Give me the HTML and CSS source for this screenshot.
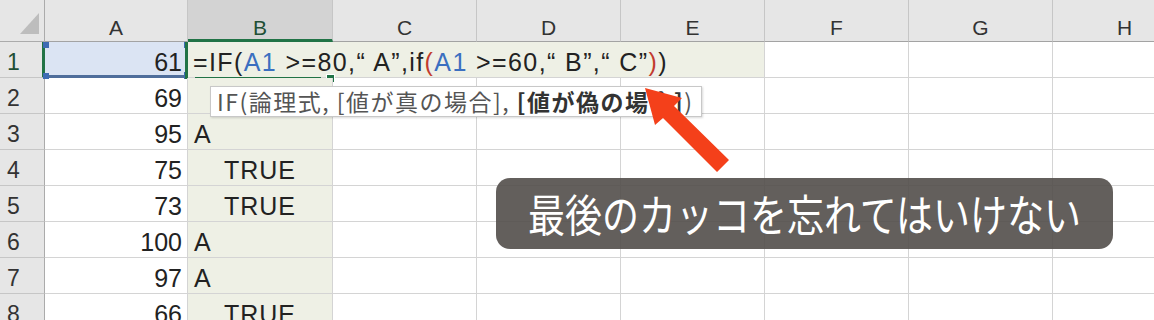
FILE: index.html
```html
<!DOCTYPE html>
<html lang="ja">
<head>
    <meta charset="UTF-8">
    <meta name="viewport" content="width=device-width, initial-scale=1.0">
    <title>IF関数</title>
    <link rel="stylesheet" href="styles.css">
</head>
<body>
    <div class="sheet">
        <div class="corner"><span class="corner-tri"></span></div>
        <div class="col-head">A</div>
        <div class="col-head sel">B</div>
        <div class="col-head">C</div>
        <div class="col-head">D</div>
        <div class="col-head">E</div>
        <div class="col-head">F</div>
        <div class="col-head">G</div>
        <div class="col-head">H</div>

        <!-- row 1 : A1 referenced, B1 in edit mode -->
        <div class="row-head sel">1</div>
        <div class="cell num ref">61
            <i class="knob tl"></i><i class="knob tr"></i><i class="knob bl"></i><i class="knob br"></i>
        </div>
        <div class="cell edit">
            <span class="formula">=IF(<span class="c-blue">A1</span> &gt;=80,“ A”,if<span class="c-red">(</span><span class="c-blue">A1</span> &gt;=60,“ B”,“ C”<span class="c-red">)</span>)</span>
            <div class="active-frame"><i class="fill-handle"></i></div>
        </div>
        <div class="cell"></div>
        <div class="cell"></div>
        <div class="cell"></div>

        <div class="row-head">2</div>
        <div class="cell num">69</div>
        <div class="cell col-b"></div>
        <div class="cell"></div><div class="cell"></div><div class="cell"></div><div class="cell"></div><div class="cell"></div><div class="cell"></div>

        <div class="row-head">3</div>
        <div class="cell num">95</div>
        <div class="cell col-b">A</div>
        <div class="cell"></div><div class="cell"></div><div class="cell"></div><div class="cell"></div><div class="cell"></div><div class="cell"></div>

        <div class="row-head">4</div>
        <div class="cell num">75</div>
        <div class="cell col-b bool">TRUE</div>
        <div class="cell"></div><div class="cell"></div><div class="cell"></div><div class="cell"></div><div class="cell"></div><div class="cell"></div>

        <div class="row-head">5</div>
        <div class="cell num">73</div>
        <div class="cell col-b bool">TRUE</div>
        <div class="cell"></div><div class="cell"></div><div class="cell"></div><div class="cell"></div><div class="cell"></div><div class="cell"></div>

        <div class="row-head">6</div>
        <div class="cell num">100</div>
        <div class="cell col-b">A</div>
        <div class="cell"></div><div class="cell"></div><div class="cell"></div><div class="cell"></div><div class="cell"></div><div class="cell"></div>

        <div class="row-head">7</div>
        <div class="cell num">97</div>
        <div class="cell col-b">A</div>
        <div class="cell"></div><div class="cell"></div><div class="cell"></div><div class="cell"></div><div class="cell"></div><div class="cell"></div>

        <div class="row-head">8</div>
        <div class="cell num">66</div>
        <div class="cell col-b bool">TRUE</div>
        <div class="cell"></div><div class="cell"></div><div class="cell"></div><div class="cell"></div><div class="cell"></div><div class="cell"></div>
    </div>

    <div class="tip">IF(論理式, [値が真の場合], <b>[値が偽の場合]</b>)</div>

    <svg class="arrow" width="1154" height="320" viewBox="0 0 1154 320">
        <polygon fill="#f4401a" points="645,88 682,98 674,106 729,160 717,172 663,118 655,125"/>
    </svg>

    <div class="callout"><span class="callout-text">最後のカッコを忘れてはいけない</span></div>
</body>
</html>
```

FILE: styles.css
```css
body {
    margin: 0;
    width: 1154px;
    height: 320px;
    overflow: hidden;
    background: #fff;
    font-family: "Liberation Sans", Arial, sans-serif;
    color: #222;
    position: relative;
}

.sheet {
    display: grid;
    grid-template-columns: 45px 143px 145px repeat(6, 144px);
    grid-template-rows: 42px repeat(8, 36px);
}

/* headers */
.corner {
    background: #e6e6e6;
    border-right: 1px solid #ababab;
    border-bottom: 1px solid #ababab;
    position: relative;
}

.corner-tri {
    position: absolute;
    left: 20px;
    top: 13px;
    width: 19px;
    height: 21px;
    background: #bdbdbd;
    clip-path: polygon(100% 0, 100% 100%, 0 100%);
}

.col-head {
    background: #e6e6e6;
    border-right: 1px solid #c6c6c6;
    border-bottom: 1px solid #a3a3a3;
    display: flex;
    align-items: flex-end;
    justify-content: center;
    padding-bottom: 3px;
    font-size: 21px;
    line-height: 1;
    color: #333;
}

.col-head.sel {
    background: #d3d3d3;
    border-bottom: 3px solid #217346;
    padding-bottom: 1px;
    color: #1f4f35;
}

.row-head {
    background: #e6e6e6;
    border-right: 1px solid #ababab;
    border-bottom: 1px solid #c6c6c6;
    display: flex;
    align-items: flex-end;
    padding: 0 0 3px 7px;
    font-size: 23px;
    line-height: 1;
    color: #333;
}

.row-head.sel {
    border-right: 3px solid #217346;
    color: #1f4f35;
}

/* cells */
.cell {
    border-right: 1px solid #d4d4d4;
    border-bottom: 1px solid #d4d4d4;
    display: flex;
    align-items: flex-end;
    padding: 0 6px 2px 6px;
    font-size: 25px;
    line-height: 1;
    white-space: nowrap;
    position: relative;
}

.num {
    justify-content: flex-end;
    padding-right: 5px;
}

.col-b {
    background: #eef0e5;
}

.bool {
    justify-content: center;
    letter-spacing: 1px;
}

.ref {
    background: #dbe4f3;
    border-bottom: 3px solid #4f6e9b;
    padding-bottom: 0;
}

.knob {
    position: absolute;
    width: 6px;
    height: 6px;
    background: #3e6bb3;
}

.knob.tl { left: -2px; top: 0; }
.knob.tr { right: -3px; top: 0; }
.knob.bl { left: -2px; bottom: -4px; }
.knob.br { right: -5px; bottom: -4px; width: 8px; height: 7px; }

.edit {
    grid-column: span 4;
    background: #eef0e5;
    padding-left: 5px;
}

.formula {
    letter-spacing: 1.4px;
}

.c-blue { color: #3b6fc0; }
.c-red { color: #c23b2e; }

.active-frame {
    position: absolute;
    left: -3px;
    top: 0;
    width: 144px;
    height: 37px;
    border-left: 3px solid #217346;
    box-sizing: border-box;
    pointer-events: none;
}

.active-frame::after {
    content: "";
    position: absolute;
    left: 7px;
    right: 8px;
    bottom: -1px;
    height: 3px;
    background: #217346;
}

.fill-handle {
    position: absolute;
    right: -6px;
    bottom: -4px;
    width: 7px;
    height: 7px;
    background: #217346;
    border: 1px solid #fff;
}

/* overlays */
.tip {
    position: absolute;
    left: 210px;
    top: 86px;
    width: 492px;
    height: 31px;
    box-sizing: border-box;
    background: #fff;
    border: 1px solid #c8c8c8;
    box-shadow: 1px 1px 2px rgba(0, 0, 0, 0.15);
    padding-left: 6px;
    font-family: "Noto Sans CJK JP", sans-serif;
    font-size: 23px;
    letter-spacing: 1.5px;
    line-height: 29px;
    color: #555;
    white-space: nowrap;
}

.tip b {
    color: #333;
}

.arrow {
    position: absolute;
    left: 0;
    top: 0;
    pointer-events: none;
}

.callout {
    position: absolute;
    left: 496px;
    top: 178px;
    width: 617px;
    height: 71px;
    border-radius: 14px;
    background: rgba(82, 78, 74, 0.9);
    color: #fff;
    font-family: "Noto Sans CJK JP", sans-serif;
    font-size: 37px;
    line-height: 71px;
    text-align: center;
    white-space: nowrap;
}

.callout-text {
    display: inline-block;
    transform: scaleY(1.2);
}
```
